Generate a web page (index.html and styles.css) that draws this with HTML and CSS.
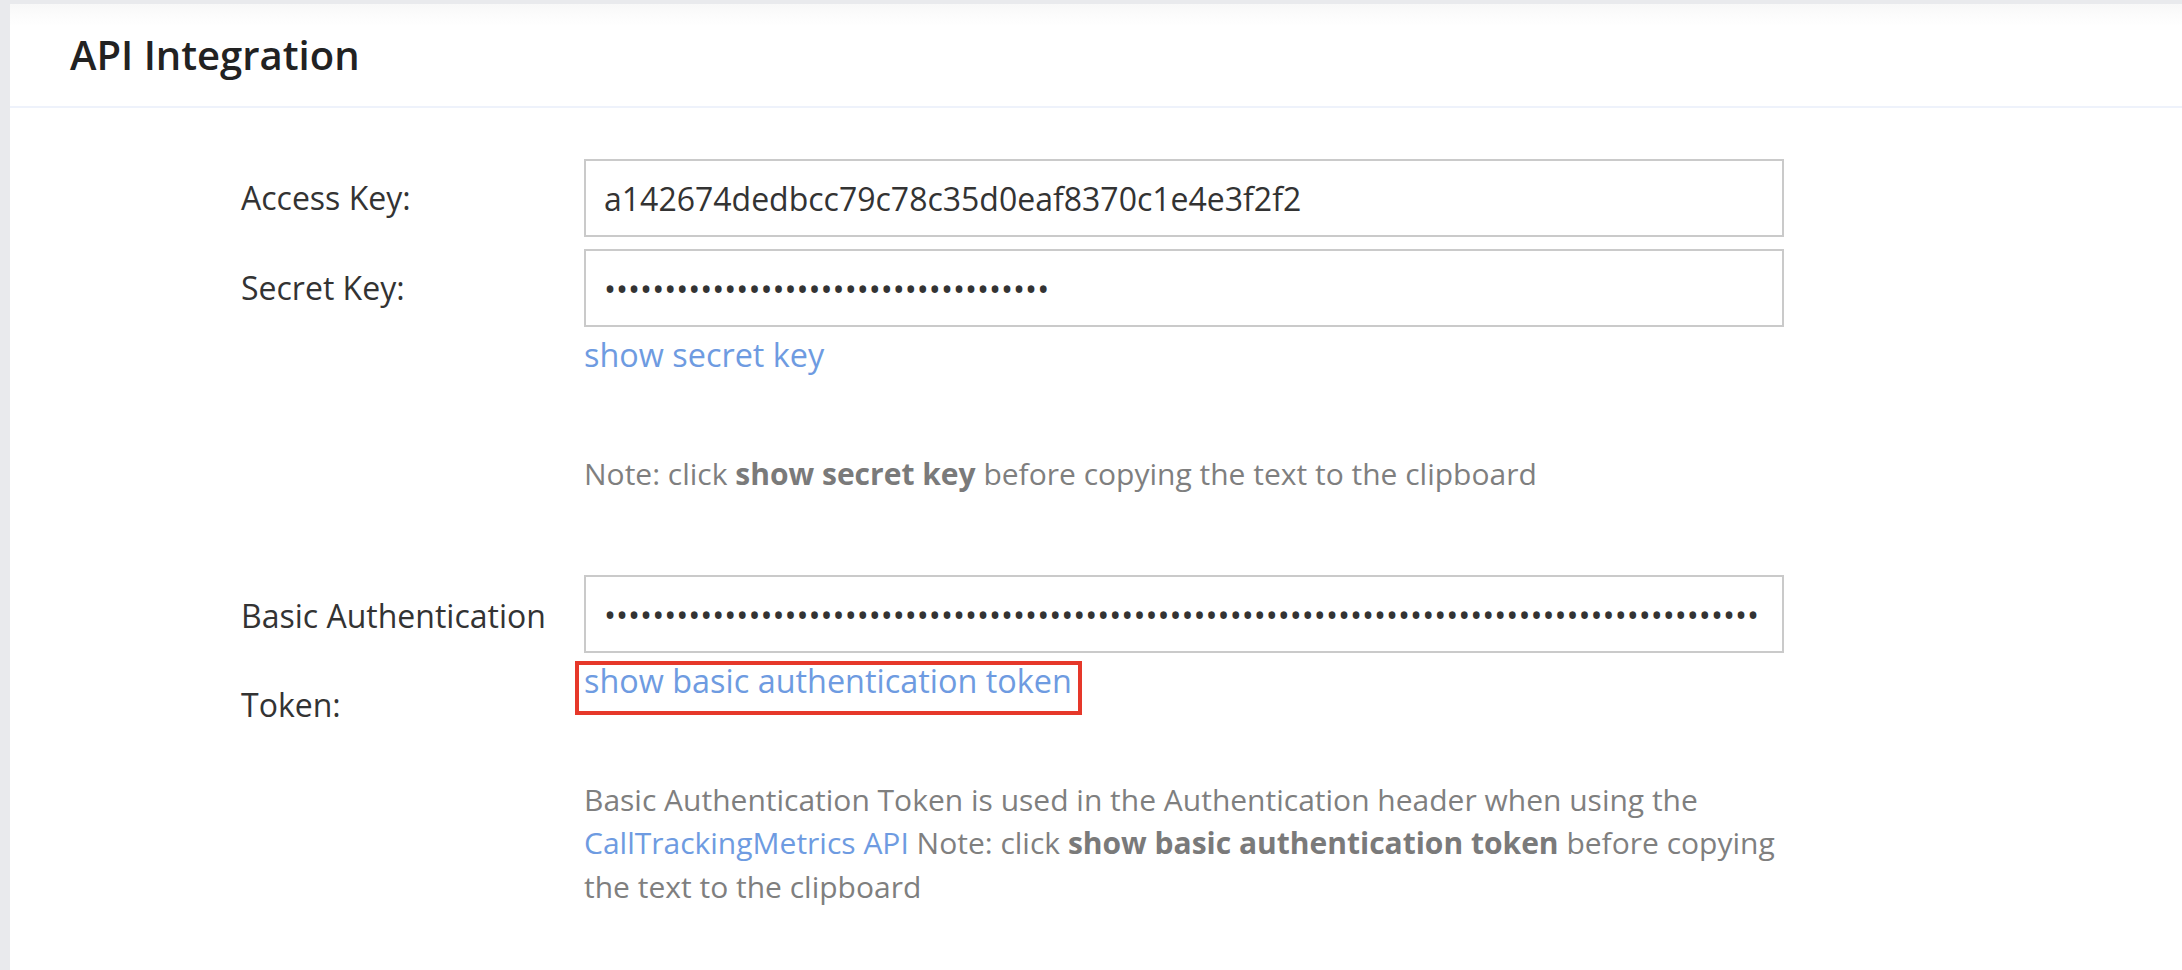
FILE: index.html
```html
<!DOCTYPE html>
<html lang="en">
<head>
<meta charset="utf-8">
<title>API Integration</title>
<link rel="stylesheet" href="styles.css">
</head>
<body>
<div class="panel">
  <div class="panel-header">
    <h2 class="panel-title">API Integration</h2>
  </div>
  <div class="panel-body">
    <div class="form-row">
      <label class="form-label" for="access-key">Access Key:</label>
      <div class="field">
        <input class="text-input" id="access-key" type="text" readonly value="a142674dedbcc79c78c35d0eaf8370c1e4e3f2f2">
      </div>
    </div>
    <div class="form-row">
      <label class="form-label" for="secret-key">Secret Key:</label>
      <div class="field">
        <input class="text-input" id="secret-key" type="password" readonly value="0123456789abcdef0123456789abcdef01234">
        <a class="toggle-link" href="#">show secret key</a>
        <p class="hint">Note: click <strong>show secret key</strong> before copying the text to the clipboard</p>
      </div>
    </div>
    <div class="form-row form-row-spaced">
      <label class="form-label form-label-wrap" for="basic-token">Basic Authentication Token:</label>
      <div class="field">
        <input class="text-input" id="basic-token" type="password" readonly value="0123456789abcdef0123456789abcdef0123456789abcdef0123456789abcdef0123456789abcdef0123456789abcdef">
        <span class="annotated"><a class="toggle-link" href="#">show basic authentication token</a></span>
        <p class="hint">Basic Authentication Token is used in the Authentication header when using the <a class="inline-link" href="#">CallTrackingMetrics API</a> Note: click <strong>show basic authentication token</strong> before copying the text to the clipboard</p>
      </div>
    </div>
  </div>
</div>
</body>
</html>
```
FILE: styles.css
```css
* { box-sizing: border-box; }

html, body {
  margin: 0;
  padding: 0;
}

body {
  background: #e9eaed;
  font-family: "Open Sans", "Noto Sans", sans-serif;
  color: #333;
  height: 970px;
  overflow: hidden;
  padding-top: 4px;
  padding-left: 10px;
}

.panel {
  background: linear-gradient(#f8f8f8, #ffffff 22px);
  min-height: 966px;
}

.panel-header {
  height: 104px;
  display: flex;
  align-items: center;
  padding: 0 60px;
  border-bottom: 2px solid #eef2fb;
}

.panel-title {
  margin: 0;
  font-size: 40px;
  line-height: 48px;
  font-weight: 600;
  color: #222;
}

.panel-body {
  padding: 51px 0 0 231px;
  display: flex;
  flex-direction: column;
  gap: 12px;
}

.form-row {
  display: flex;
  align-items: flex-start;
}

.form-row-spaced {
  margin-top: 68px;
}

.form-label {
  width: 343px;
  flex: none;
  font-size: 32px;
  line-height: 78px;
  color: #333;
}

.form-label-wrap {
  line-height: 89px;
  margin-top: -4px;
  padding-right: 20px;
}

.field {
  width: 1200px;
  display: flex;
  flex-direction: column;
  align-items: flex-start;
}

.text-input {
  width: 1200px;
  height: 78px;
  border: 2px solid #cacaca;
  border-radius: 0;
  padding: 0 18px;
  font-family: "Open Sans", "Noto Sans", sans-serif;
  font-size: 32px;
  color: #333;
  background: #fff;
  outline: none;
}

.toggle-link {
  display: inline-block;
  margin-top: 6px;
  font-size: 32.4px;
  line-height: 43.6px;
  color: #6e9be1;
  text-decoration: none;
}

.annotated {
  position: relative;
  display: inline-block;
}

.annotated::after {
  content: "";
  position: absolute;
  left: -9px;
  right: -10px;
  top: 8px;
  bottom: -12px;
  border: 4px solid #e6382a;
  pointer-events: none;
}

.hint {
  margin: 75px 0 0;
  font-size: 30px;
  line-height: 43.6px;
  color: #7f7f7f;
}

.hint strong {
  font-weight: 700;
  color: #7a7a7a;
}

.inline-link {
  color: #6e9be1;
  text-decoration: none;
}
```
